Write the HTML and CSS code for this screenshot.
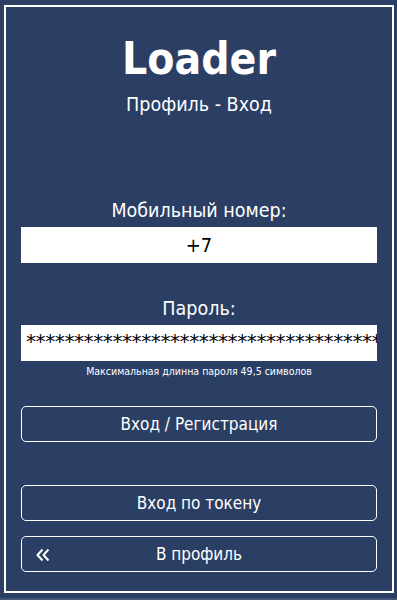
FILE: index.html
```html
<!DOCTYPE html>
<html lang="ru">
<head>
<meta charset="utf-8">
<title>Loader</title>
<link rel="stylesheet" href="styles.css">
</head>
<body>
<div class="frame">
  <h1 class="title">Loader</h1>
  <div class="subtitle">Профиль - Вход</div>

  <label class="label label-phone">Мобильный номер:</label>
  <div class="field field-phone">+7</div>

  <label class="label label-pass">Пароль:</label>
  <div class="field field-pass">**************************************</div>
  <div class="hint">Максимальная длинна пароля 49,5 символов</div>

  <button class="btn btn-login">Вход / Регистрация</button>
  <button class="btn btn-token">Вход по токену</button>
  <button class="btn btn-profile"><svg class="back" width="14" height="14" viewBox="0 0 14 14"><polyline points="6.5,1.5 1.5,7 6.5,12.5" fill="none" stroke="#ffffff" stroke-width="2"/><polyline points="12.5,1.5 7.5,7 12.5,12.5" fill="none" stroke="#ffffff" stroke-width="2"/></svg>В профиль</button>
</div>
<div class="strip"></div>
</body>
</html>
```

FILE: styles.css
```css
html, body {
  margin: 0;
  padding: 0;
  background: #2b3e64;
}
body {
  height: 600px;
  overflow: hidden;
  font-family: "DejaVu Sans Condensed", "DejaVu Sans", sans-serif;
  color: #ffffff;
  display: flex;
  flex-direction: column;
}
.frame {
  box-sizing: border-box;
  margin: 5px 3px 0 4px;
  width: 390px;
  height: 588px;
  border: 2px solid #ffffff;
  padding: 0 15px;
  display: flex;
  flex-direction: column;
  align-items: stretch;
}
.strip {
  margin-top: auto;
  height: 2px;
  background: #44557a;
}
.title {
  margin: 26px 0 0;
  font-family: "DejaVu Sans Condensed", "DejaVu Sans", sans-serif;
  font-weight: bold;
  font-size: 44px;
  line-height: 52px;
  text-align: center;
}
.subtitle {
  margin-top: 8px;
  font-size: 19.5px;
  line-height: 24px;
  text-align: center;
}
.label {
  display: block;
  text-align: center;
  font-size: 19.5px;
  line-height: 24px;
}
.label-phone {
  margin-top: 82px;
}
.label-pass {
  margin-top: 34px;
}
.field {
  margin-top: 4px;
  height: 36px;
  background: #ffffff;
  color: #000000;
  font-size: 20px;
  line-height: 36px;
  white-space: nowrap;
  overflow: hidden;
}
.field-phone {
  text-align: center;
}
.field-pass {
  padding-left: 5px;
  font-family: "DejaVu Sans", sans-serif;
  line-height: 33px;
  letter-spacing: -0.4px;
}
.hint {
  margin-top: 3px;
  font-size: 10.5px;
  line-height: 14px;
  text-align: center;
}
.btn {
  position: relative;
  display: block;
  height: 36px;
  border: 1px solid #ffffff;
  border-radius: 5px;
  background: transparent;
  color: #ffffff;
  font-family: "DejaVu Sans Condensed", "DejaVu Sans", sans-serif;
  font-size: 17px;
  padding: 0;
  text-align: center;
}
.btn-login {
  margin-top: 28px;
}
.btn-token {
  margin-top: 43px;
}
.btn-profile {
  margin-top: 15px;
}
.back {
  position: absolute;
  left: 14px;
  top: 11px;
}
```
